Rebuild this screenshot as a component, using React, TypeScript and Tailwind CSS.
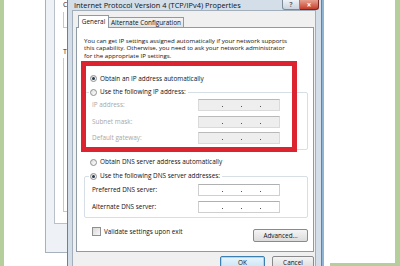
import clsx from "clsx"

function Radio({ checked }: { checked?: boolean }) {
  return (
    <span className="flex h-[7px] w-[7px] shrink-0 items-center justify-center rounded-full border border-[#8e8f8f] bg-gradient-to-br from-[#dcdcdc] to-white">
      {checked && <span className="h-[3px] w-[3px] rounded-full bg-[#26384a]" />}
    </span>
  )
}

function IpField({ disabled }: { disabled?: boolean }) {
  return (
    <div
      className={clsx(
        "flex h-[12px] w-[82px] items-end gap-[18px] border pb-[3px] pl-[23px]",
        disabled ? "border-[#dadada] border-t-[#b9b9b9] bg-[#eeeeee]" : "border-[#cfcfcf] border-t-[#b0b0b0] bg-white"
      )}
    >
      <span className="h-[1px] w-[1px] bg-[#555]" />
      <span className="h-[1px] w-[1px] bg-[#555]" />
      <span className="h-[1px] w-[1px] bg-[#555]" />
    </div>
  )
}

function FieldRow({ label, disabled }: { label: string; disabled?: boolean }) {
  return (
    <div className="flex h-[12px] items-center">
      <span className={clsx("w-[113px] pl-[7px]", disabled && "text-[#a8a8a8]")}>{label}</span>
      <IpField disabled={disabled} />
    </div>
  )
}

function BackWindow() {
  return (
    <div className="w-[22px] shrink-0">
      <div className="h-[253px] border-b border-l border-[#a7b1bb] bg-[#eef2f6] pl-[8px]">
        <div className="h-[224px] border-b border-l border-[#b9c0c7] bg-white pl-[8px]">
          <div className="pt-[1px] text-[7px] leading-[7px]">C</div>
          <div className="mt-[4px] h-[16px] border-b border-l border-[#c3c9cf]" />
          <div className="mt-[20px] text-[7px] leading-[7px]">T</div>
          <div className="mt-[3px] h-[154px] border-b border-l border-[#c3c9cf]" />
        </div>
      </div>
    </div>
  )
}

function Dialog() {
  return (
    <div className="flex w-[255px] shrink-0 flex-col border-x border-[#72808e] bg-[#d3dee9]">
      <div className="flex h-[11px] items-start">
        <div className="pl-[6px] pt-[1px] text-[7.4px] leading-[9px] text-[#111]">
          Internet Protocol Version 4 (TCP/IPv4) Properties
        </div>
        <div className="ml-auto mr-[2px] flex">
          <div className="flex h-[10px] w-[18px] items-center justify-center rounded-bl-[3px] border border-t-0 border-[#7d8b99] bg-gradient-to-b from-[#eef2f6] to-[#c9d4df] text-[7px] font-bold leading-none text-[#5d6b78]">
            ?
          </div>
          <div className="flex h-[10px] w-[19px] items-center justify-center rounded-br-[3px] border border-l-0 border-t-0 border-[#7a2a22] bg-gradient-to-b from-[#e7a08f] to-[#c43b2b] text-[8px] font-bold leading-none text-white">
            ×
          </div>
        </div>
      </div>
      <div className="flex flex-1 flex-col pl-[4px] pr-[5px]">
        <div className="flex flex-1 flex-col border border-b-0 border-[#a3aebb] bg-[#f0f0f0] pl-[3px] pr-[1px] text-[6.4px] leading-[8px] text-[#111]">
          <div className="relative z-10 -mb-px ml-[2px] mt-[4px] flex h-[13px] items-end">
            <div className="h-[13px] w-[31px] border border-b-0 border-[#8e9aa5] bg-white text-center leading-[11px]">
              General
            </div>
            <div className="mb-[1px] h-[10px] w-[75px] border border-b-0 border-l-0 border-[#8e9aa5] bg-gradient-to-b from-[#f4f4f4] to-[#e2e2e2] text-center leading-[9px]">
              Alternate Configuration
            </div>
          </div>
          <div className="relative h-[225px] border border-[#8e9aa5] bg-white pl-[7px] pr-[5px]">
            <p className="mt-[8.5px] text-[6.15px] leading-[7.7px]">
              You can get IP settings assigned automatically if your network supports
              <br />
              this capability. Otherwise, you need to ask your network administrator
              <br />
              for the appropriate IP settings.
            </p>
            <div className="ml-[6px] mt-[15px] flex h-[8px] items-center gap-[3px]">
              <Radio checked />
              <span>Obtain an IP address automatically</span>
            </div>
            <div className="mt-[9.5px] h-[58px] rounded-[2px] border border-[#d5dfe5]">
              <div className="-mt-[5px] ml-[4px] flex h-[8px] w-fit items-center gap-[3px] bg-white pl-[1px] pr-[2px]">
                <Radio />
                <span>Use the following IP address:</span>
              </div>
              <div className="mt-[3px] flex flex-col gap-[4.5px]">
                <FieldRow label="IP address:" disabled />
                <FieldRow label="Subnet mask:" disabled />
                <FieldRow label="Default gateway:" disabled />
              </div>
            </div>
            <div className="ml-[6px] mt-[8px] flex h-[8px] items-center gap-[3px]">
              <Radio />
              <span>Obtain DNS server address automatically</span>
            </div>
            <div className="mt-[10px] h-[42px] rounded-[2px] border border-[#d5dfe5]">
              <div className="-mt-[5px] ml-[4px] flex h-[8px] w-fit items-center gap-[3px] bg-white pl-[1px] pr-[2px]">
                <Radio checked />
                <span>Use the following DNS server addresses:</span>
              </div>
              <div className="mt-[4px] flex flex-col gap-[5px]">
                <FieldRow label="Preferred DNS server:" />
                <FieldRow label="Alternate DNS server:" />
              </div>
            </div>
            <div className="mt-[9px] flex items-start">
              <div className="ml-[8px] flex items-center gap-[3px]">
                <span className="h-[9px] w-[9px] border border-[#8f8f8f] bg-gradient-to-br from-[#d8d8d8] to-[#f8f8f8]" />
                <span className="leading-[9px]">Validate settings upon exit</span>
              </div>
              <div className="ml-auto mt-[2px] flex h-[13px] w-[55px] items-center justify-center rounded-[2px] border border-[#8a8a8a] bg-gradient-to-b from-[#f4f4f4] to-[#dcdcdc]">
                Advanced...
              </div>
            </div>
            <div className="absolute left-[4px] top-[33px] h-[91px] w-[216px] border-[5px] border-[#dc2430]" />
          </div>
          <div className="mt-[4px] flex justify-end gap-[7px]">
            <div className="flex h-[13px] w-[45px] items-start justify-center rounded-[2px] border border-[#3c7fb1] bg-gradient-to-b from-[#eaf6fd] to-[#c4e5f6] pt-[2px] shadow-[inset_0_0_0_1px_#9fdcfb]">
              OK
            </div>
            <div className="flex h-[13px] w-[42px] items-start justify-center rounded-[2px] border border-[#8a8a8a] bg-gradient-to-b from-[#f4f4f4] to-[#dcdcdc] pt-[2px]">
              Cancel
            </div>
          </div>
        </div>
      </div>
    </div>
  )
}

export default function App() {
  return (
    <div className="flex h-[266px] w-[400px] overflow-hidden bg-white font-['Open_Sans','Noto_Sans',sans-serif] text-[#1e1e1e]">
      <div className="w-[4px] shrink-0 bg-[#b5cf9c]" />
      <div className="w-[41px] shrink-0 bg-white" />
      <BackWindow />
      <Dialog />
      <div className="w-[2px] shrink-0 bg-[#8fb3d4]" />
      <div className="flex flex-1 flex-col">
        <div className="flex-1 bg-white" />
        <div className="ml-[6px] h-[3px] bg-[#b5cf9c]" />
      </div>
      <div className="w-[5px] shrink-0 bg-[#b5cf9c]" />
    </div>
  )
}
